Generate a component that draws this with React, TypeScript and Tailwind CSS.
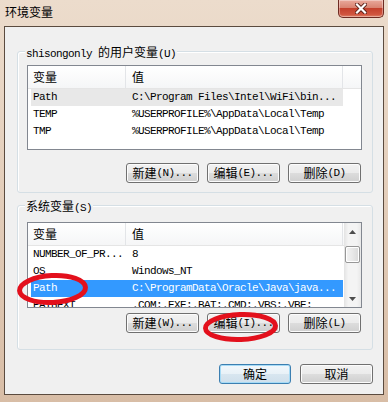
import type { ReactNode } from 'react';

const cjk = "font-['Noto_Sans_CJK_SC',sans-serif] text-[12px] tracking-normal";
const mono = "font-['Liberation_Mono',monospace] text-[11px] tracking-[-0.6px]";

type Row = { name: string; value: string; sel?: 'active' | 'inactive' };

const userRows: Row[] = [
  { name: 'Path', value: 'C:\\Program Files\\Intel\\WiFi\\bin...', sel: 'inactive' },
  { name: 'TEMP', value: '%USERPROFILE%\\AppData\\Local\\Temp' },
  { name: 'TMP', value: '%USERPROFILE%\\AppData\\Local\\Temp' },
];

const systemRows: Row[] = [
  { name: 'NUMBER_OF_PR...', value: '8' },
  { name: 'OS', value: 'Windows_NT' },
  { name: 'Path', value: 'C:\\ProgramData\\Oracle\\Java\\java...', sel: 'active' },
  { name: 'PATHEXT', value: '.COM;.EXE;.BAT;.CMD;.VBS;.VBE;' },
];

// splits mixed text so CJK and the SimSun-like latin get their own sizes
function Txt({ s }: { s: string }) {
  const parts = s.split(/([\u4e00-\u9fff]+)/).filter(Boolean);
  return (
    <>
      {parts.map((p, i) =>
        /[\u4e00-\u9fff]/.test(p) ? (
          <span key={i} className={cjk}>
            {p}
          </span>
        ) : (
          <span key={i} className={mono}>
            {p}
          </span>
        ),
      )}
    </>
  );
}

function Button({ label, primary = false, narrow = false }: { label: string; primary?: boolean; narrow?: boolean }) {
  return (
    <div
      className={`${narrow ? 'w-[72px]' : 'w-[73px]'} h-[20px] flex items-center justify-center rounded-[3px] border whitespace-nowrap text-black leading-none ${
        primary
          ? 'border-[#3c7fb1] bg-[linear-gradient(#f2f8fc_0%,#e8f1f7_50%,#d8e6f0_50%,#cfdfeb_100%)] shadow-[inset_0_0_0_1px_#a6dbf6]'
          : 'border-[#707070] bg-[linear-gradient(#f2f2f2_0%,#ebebeb_50%,#dddddd_50%,#cfcfcf_100%)] shadow-[inset_0_0_0_1px_#fcfcfc]'
      }`}
    >
      <Txt s={label} />
    </div>
  );
}

function Header({ withTail }: { withTail: boolean }) {
  return (
    <div className="h-[23px] flex shrink-0 border-b border-[#e5e5e5] bg-[linear-gradient(#ffffff,#f5f6f7)]">
      <div className={`w-[98px] pl-[5px] flex items-center border-r border-[#e3e5e8] ${cjk}`}>变量</div>
      <div className={`w-[217px] pl-[6px] flex items-center border-r border-[#e3e5e8] ${cjk}`}>值</div>
      {withTail && <div className="flex-1" />}
    </div>
  );
}

function RowView({ row }: { row: Row }) {
  const tone =
    row.sel === 'active'
      ? 'bg-[#3399ff] text-white'
      : row.sel === 'inactive'
        ? 'bg-[#e8e8e8] text-black'
        : 'text-black';
  return (
    <div className={`ml-[3px] w-[312px] h-[17px] shrink-0 flex items-center whitespace-nowrap overflow-hidden ${tone}`}>
      <div className={`w-[95px] shrink-0 pl-[2px] ${mono}`}>{row.name}</div>
      <div className={`pl-[6px] ${mono}`}>{row.value}</div>
    </div>
  );
}

function Arrow({ up }: { up: boolean }) {
  return (
    <svg width="7" height="4" viewBox="0 0 7 4">
      <path d={up ? 'M0 4 L3.5 0 L7 4 Z' : 'M0 0 L3.5 4 L7 0 Z'} fill="#4d4d4d" />
    </svg>
  );
}

function ScrollBar() {
  return (
    <div className="w-[17px] flex flex-col bg-[linear-gradient(90deg,#e3e3e3,#f4f4f4_25%,#f4f4f4_75%,#e8e8e8)]">
      <div className="h-[17px] flex items-center justify-center">
        <Arrow up />
      </div>
      <div className="mt-[6px] mx-[1px] h-[17px] rounded-[2px] border border-[#979797] bg-[linear-gradient(90deg,#f3f3f3,#e8e8e8_50%,#d9d9d9)] shadow-[inset_0_0_0_1px_#ffffff]" />
      <div className="flex-1" />
      <div className="h-[17px] flex items-center justify-center">
        <Arrow up={false} />
      </div>
    </div>
  );
}

function ListView({ rows, scroll, height }: { rows: Row[]; scroll: boolean; height: string }) {
  return (
    <div className={`ml-[9px] w-[335px] ${height} border border-[#828790] bg-white flex overflow-hidden`}>
      <div className="flex-1 flex flex-col overflow-hidden">
        <Header withTail={!scroll} />
        {rows.map((r) => (
          <RowView key={r.name + r.value} row={r} />
        ))}
      </div>
      {scroll && <ScrollBar />}
    </div>
  );
}

function Group({ title, children, height }: { title: string; children: ReactNode; height: string }) {
  return (
    <div className={`relative w-[356px] ${height} rounded-[3px] border border-[#d5dfe5] shadow-[inset_1px_1px_0_#ffffff]`}>
      <div className="absolute left-[7px] top-[-8px] px-[1px] bg-[#f0f0f0] leading-[15px] whitespace-nowrap text-black">
        <Txt s={title} />
      </div>
      {children}
    </div>
  );
}

function Buttons({ labels, className }: { labels: string[]; className: string }) {
  return (
    <div className={`flex justify-end gap-[8px] pr-[11px] ${className}`}>
      {labels.map((l) => (
        <Button key={l} label={l} />
      ))}
    </div>
  );
}

export default function App() {
  return (
    <div className="relative w-[388px] h-[402px] overflow-hidden bg-[linear-gradient(180deg,#ecdccc_0%,#e4cfbc_45%,#d8bda6_100%)]">
      <div className="h-[26px] flex items-start justify-between">
        <div className={`pl-[5px] pt-[3px] leading-[18px] text-black ${cjk}`}>环境变量</div>
        <div className="mr-[4px] w-[46px] h-[18px] flex items-center justify-center rounded-b-[5px] border border-t-0 border-[#6e2b22] bg-[linear-gradient(#e9a99b_0%,#d98371_45%,#c4402c_50%,#d0553f_85%,#e0866b_100%)] shadow-[inset_0_0_0_1px_rgba(255,255,255,0.35)]">
          <svg width="12" height="11" viewBox="0 0 12 11">
            <path d="M2 1.5 L10 9.5 M10 1.5 L2 9.5" stroke="#5a2018" strokeWidth="4" strokeLinecap="square" />
            <path d="M2 1.5 L10 9.5 M10 1.5 L2 9.5" stroke="#ffffff" strokeWidth="2.2" strokeLinecap="square" />
          </svg>
        </div>
      </div>

      <div className="ml-[4px] w-[380px] h-[369px] border border-[#5b4b3f] bg-[#f0f0f0] pl-[12px] pt-[24px] flex flex-col">
        <Group title="shisongonly 的用户变量(U)" height="h-[142px]">
          <div className="mt-[13px]">
            <ListView rows={userRows} scroll={false} height="h-[85px]" />
          </div>
          <Buttons labels={['新建(N)...', '编辑(E)...', '删除(D)']} className="mt-[13px]" />
        </Group>

        <div className="mt-[12px]">
          <Group title="系统变量(S)" height="h-[145px]">
            <div className="mt-[16px]">
              <ListView rows={systemRows} scroll height="h-[86px]" />
            </div>
            <Buttons labels={['新建(W)...', '编辑(I)...', '删除(L)']} className="mt-[5px]" />
          </Group>
        </div>

        <div className="mt-[14px] w-[356px] flex justify-end gap-[9px]">
          <Button label="确定" primary narrow />
          <Button label="取消" />
        </div>
      </div>

      <svg className="absolute inset-0 pointer-events-none" width="388" height="402" viewBox="0 0 388 402">
        <ellipse cx="52.5" cy="289" rx="33" ry="13.5" transform="rotate(-3 52.5 289)" fill="none" stroke="#e3101c" strokeWidth="5" />
        <ellipse cx="240.5" cy="327" rx="35" ry="12.5" transform="rotate(-2 240.5 327)" fill="none" stroke="#e3101c" strokeWidth="5" />
      </svg>
    </div>
  );
}
